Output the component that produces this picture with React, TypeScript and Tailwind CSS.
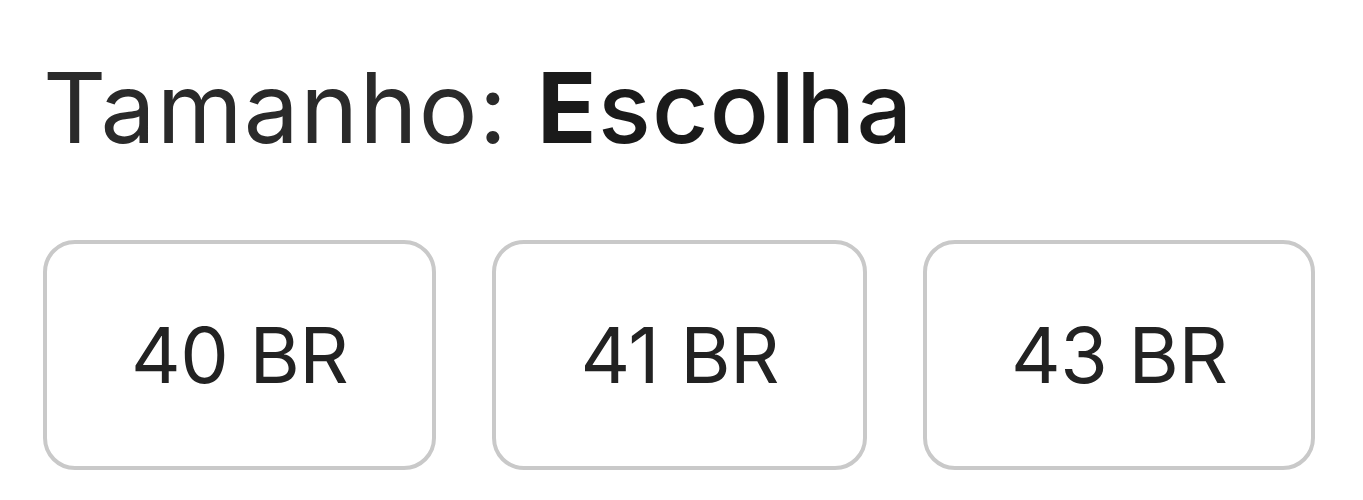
export default function App() {
  const sizes = ["40 BR", "41 BR", "43 BR"];
  return (
    <div className="w-[1363px] h-[500px] bg-white" style={{ fontFamily: "Inter, 'Noto Sans', sans-serif" }}>
      <div className="pl-[43px] pt-[59px]">
        <h2 className="text-[98px] leading-none text-[#2a2a2a] tracking-[1.3px] font-normal">
          Tamanho: <span className="font-bold text-[#1a1a1a]">E</span>
          <span className="font-medium text-[#1a1a1a]">scolha</span>
        </h2>
        <div className="mt-[83px] flex gap-[56px]">
          {sizes.map((s) => (
            <button
              key={s}
              className="h-[230px] px-[84px] border-[4px] border-[#c9c9c9] rounded-[32px] bg-white text-[77px] tracking-[-0.5px] leading-none text-[#222]"
            >
              {s}
            </button>
          ))}
        </div>
      </div>
    </div>
  );
}
